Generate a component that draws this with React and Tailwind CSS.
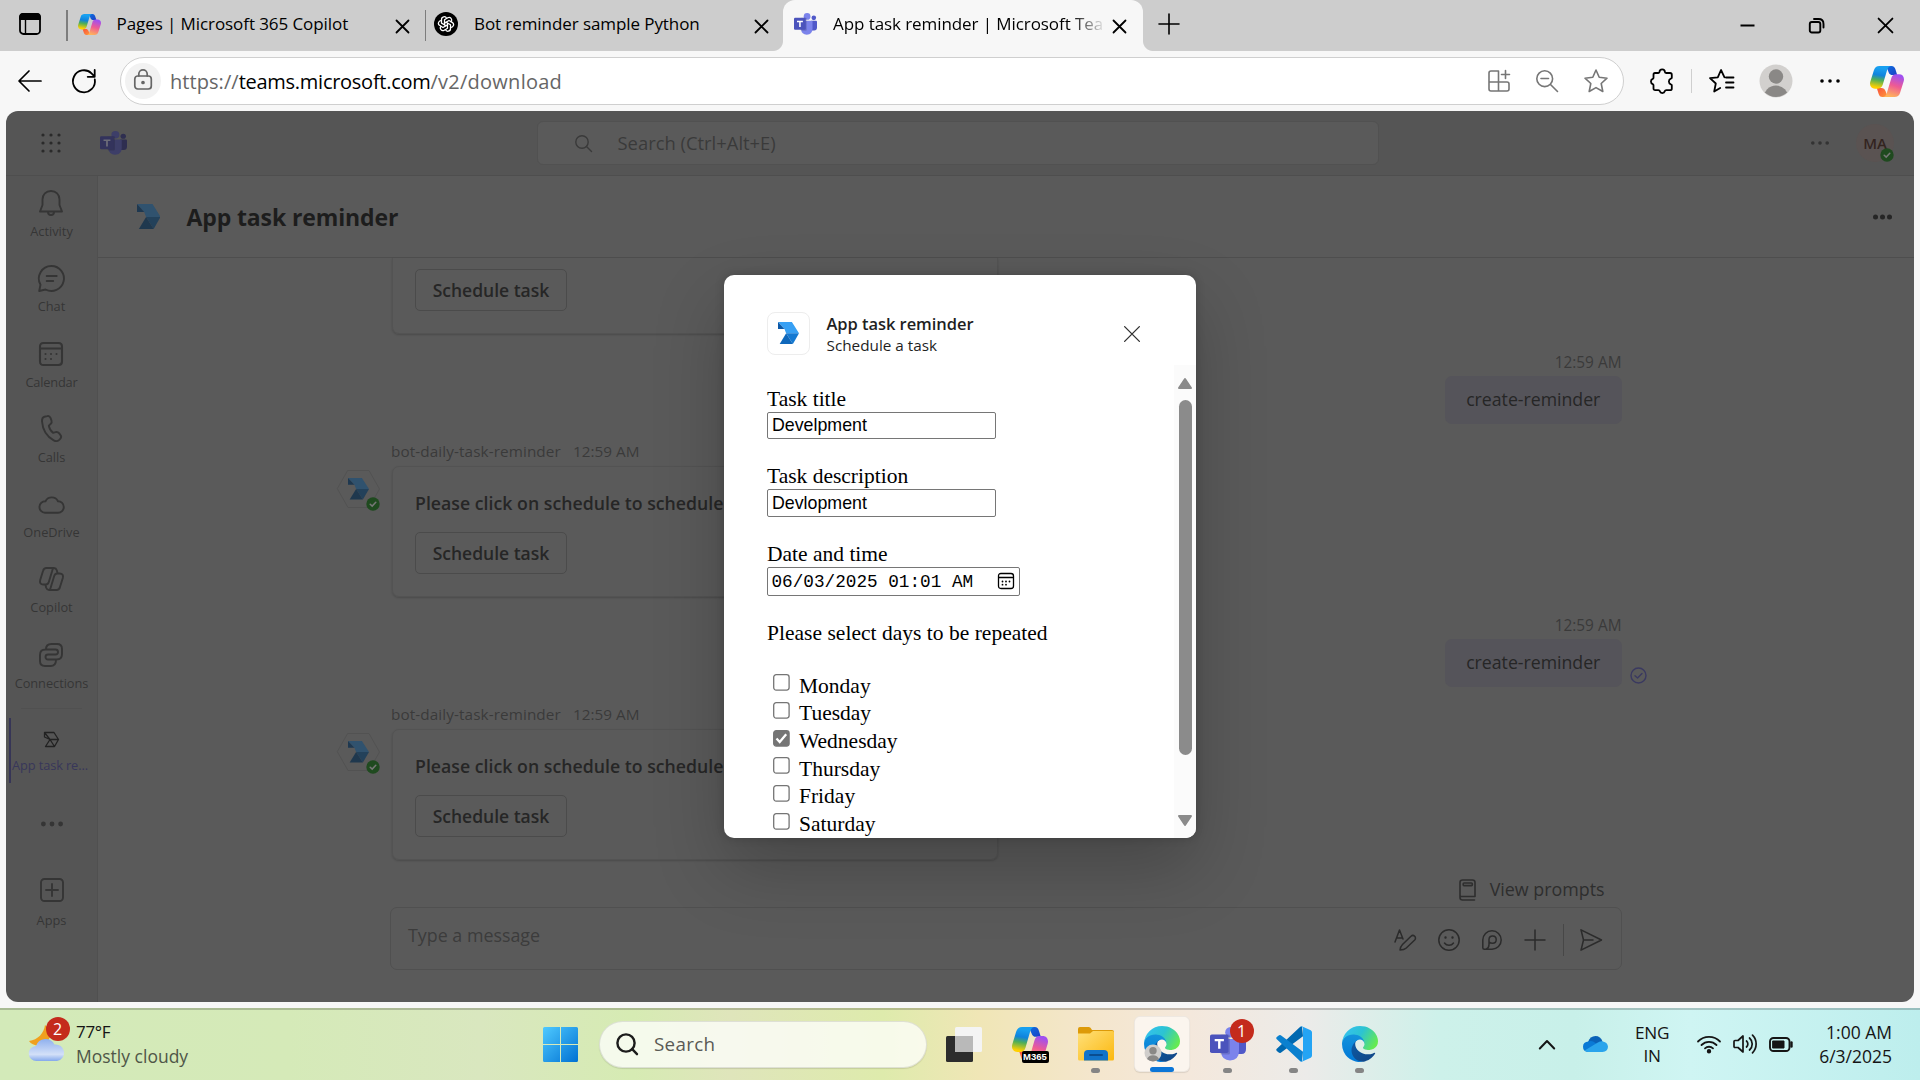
import { TbBrandOpenai } from "react-icons/tb";

function Ico({ w, h, sw = 1.6, className = "", children, vb }) {
  return (
    <svg
      width={w}
      height={h}
      viewBox={vb || `0 0 ${w} ${h}`}
      fill="none"
      stroke="currentColor"
      strokeWidth={sw}
      strokeLinecap="round"
      strokeLinejoin="round"
      className={`block shrink-0 overflow-visible ${className}`}
    >
      {children}
    </svg>
  );
}

/* ---------- logos ---------- */

function CopilotLogo({ w, h, className = "" }) {
  return (
    <svg width={w} height={h} viewBox="0 0 34 30" preserveAspectRatio="none" className={`block shrink-0 ${className}`}>
      <defs>
        <linearGradient id="cpA" x1="0.5" y1="0" x2="0.35" y2="1">
          <stop offset="0.1" stopColor="#18a0f0" />
          <stop offset="0.4" stopColor="#0f83dd" />
          <stop offset="0.62" stopColor="#4fae57" />
          <stop offset="0.95" stopColor="#ffd000" />
        </linearGradient>
        <linearGradient id="cpB" x1="0.7" y1="0" x2="0.4" y2="1">
          <stop offset="0.05" stopColor="#a050f0" />
          <stop offset="0.5" stopColor="#ee5a94" />
          <stop offset="1" stopColor="#ffb45a" />
        </linearGradient>
        <linearGradient id="cpC" x1="0" y1="0" x2="1" y2="1">
          <stop offset="0" stopColor="#0f6fe0" />
          <stop offset="1" stopColor="#1a3fc4" />
        </linearGradient>
        <linearGradient id="cpD" x1="0" y1="0" x2="1" y2="1">
          <stop offset="0" stopColor="#f9503c" />
          <stop offset="1" stopColor="#ff9a3c" />
        </linearGradient>
      </defs>
      <path d="M16 0h5.5c2.2 0 3.3 1.3 4 3.5l1.700 5.200h-4.400c-2.300 0-3.600-.9-4.300-3L17.300 3z" fill="url(#cpC)" />
      <path d="M18 30h-5.500c-2.200 0-3.300-1.300-4-3.500l-1.700-5.200h4.400c2.300 0 3.600.9 4.300 3l1.200 2.700z" fill="url(#cpD)" />
      <path d="M9.500 0H21c-2.300.4-3.300 2-4 4.400l-4.200 13.600c-.8 2.600-2.300 4-5 4H5C1.200 22-.8 19 .3 15.200l3.600-11C4.800 1.300 6.600 0 9.500 0z" fill="url(#cpA)" />
      <path d="M24.500 30H13c2.300-.4 3.300-2 4-4.400l4.200-13.600c.8-2.600 2.300-4 5-4H29c3.800 0 5.800 3 4.700 6.800l-3.600 11c-.9 2.900-2.700 4.200-5.600 4.200z" fill="url(#cpB)" />
    </svg>
  );
}

function TeamsLogo({ w, h, dim, className = "" }) {
  const c = dim
    ? { a: "#33335c", b: "#3d3e68", c: "#2e2e50", t: "#6c6c78" }
    : { a: "#4b53bc", b: "#7b83eb", c: "#5059c9", t: "#ffffff" };
  return (
    <svg width={w} height={h} viewBox="0 0 36 34" preserveAspectRatio="none" className={`block shrink-0 ${className}`}>
      <circle cx="31" cy="7.500" r="3.600" fill={c.c} />
      <path d="M27 12h7.500q1.500 0 1.500 1.500v8.500q0 5-4.500 5H27z" fill={c.c} />
      <circle cx="20.500" cy="5.300" r="5.300" fill={c.b} />
      <path d="M12 12h15.500q1.500 0 1.500 1.500V24q0 9-9 9.500-8-.4-9-8z" fill={c.b} />
      <rect x="10" y="7.500" width="10" height="20" rx="1.500" fill="#000" opacity="0.14" />
      <rect x="0" y="7.500" width="18.500" height="18.500" rx="1.800" fill={c.a} />
      <path d="M4.700 12h9.200v2.300h-3.400v7.500H8.100v-7.500H4.700z" fill={c.t} />
    </svg>
  );
}

function AppLogo({ w, h, dim, className = "" }) {
  const c = dim ? ["#30526e", "#23415a", "#1f384e", "#1e3850"] : ["#37a0f4", "#1479d2", "#0f68bb", "#0c59a8"];
  return (
    <svg width={w} height={h} viewBox="0 0 62 66" preserveAspectRatio="none" className={`block shrink-0 ${className}`}>
      <path d="M0 0H41L62 34H24L19 21Z" fill={c[0]} />
      <path d="M0 0V21H19Z" fill={c[3]} />
      <path d="M24 34H62L44 66Z" fill={c[1]} />
      <path d="M24 34L44 66H5Z" fill={c[2]} />
    </svg>
  );
}

function EdgeLogo() {
  return (
    <svg width="36" height="36" viewBox="0 0 256 256" className="block shrink-0">
      <defs>
        <linearGradient id="egA" x1="0.2" y1="0" x2="0.9" y2="0.6">
          <stop offset="0" stopColor="#0c59a4" />
          <stop offset="1" stopColor="#114a8b" />
        </linearGradient>
        <linearGradient id="egB" x1="0.5" y1="0" x2="0.4" y2="1">
          <stop offset="0" stopColor="#1595dc" />
          <stop offset="1" stopColor="#0078d7" />
        </linearGradient>
        <linearGradient id="egC" x1="0" y1="0.2" x2="1" y2="0.6">
          <stop offset="0" stopColor="#35c1f1" />
          <stop offset="0.5" stopColor="#2cc3d2" />
          <stop offset="1" stopColor="#66eb50" />
        </linearGradient>
      </defs>
      <path fill="url(#egA)" d="M231 190.500a99 99 0 0 1-10.800 4.700 104.700 104.700 0 0 1-36.600 6.500c-48.100 0-90-33.100-90-75.500a32 32 0 0 1 16.700-27.900c-43.500 1.800-54.700 47.200-54.700 73.700 0 75.100 69.200 82.700 84.100 82.700 8 0 20.100-2.300 27.400-4.600l1.300-.5a128 128 0 0 0 66.600-52.800 4 4 0 0 0-4-6.300z" />
      <path fill="url(#egB)" d="M105.700 241.400a79.200 79.200 0 0 1-22.700-21.300 80.700 80.700 0 0 1 29.500-119.700c3.100-1.500 8.500-4.100 15.600-4a32.400 32.400 0 0 1 25.700 13 31.900 31.900 0 0 1 6.300 18.700c0-.2 24.500-79.600-80-79.600-43.900 0-80 41.700-80 78.200a130 130 0 0 0 12.100 56 128 128 0 0 0 156.400 67 75.600 75.600 0 0 1-62.800-8z" />
      <path fill="url(#egC)" d="M152.300 148.900c-.8 1-3.300 2.500-3.300 5.700 0 2.600 1.700 5.100 4.700 7.200 14.400 10 41.500 8.700 41.600 8.700 10.700 0 21.100-2.900 30.300-8.300a61.400 61.400 0 0 0 30.400-53c.3-22.400-8-37.300-11.300-43.900C223.500 23.900 177.700 0 128 0A128 128 0 0 0 0 126.200c.5-36.500 36.800-66 80-66 3.500 0 23.500.3 42 10 16.300 8.600 24.900 19 30.800 29.300 6.200 10.700 7.300 24.200 7.300 29.500 0 5.400-2.800 13.400-7.800 19.900z" />
    </svg>
  );
}

function VsCodeLogo() {
  return (
    <svg width="36" height="36" viewBox="0 0 36 36" className="block shrink-0">
      <path d="M26 0.500L27 10.300L4.800 26.700Q3.700 27.500 2.700 26.600L0.800 24.900Q-0.300 23.800 0.800 22.700L24 1Q25 .2 26 .5Z" fill="#0068b0" />
      <path d="M26 35.500L27 25.700L4.800 9.300Q3.700 8.500 2.700 9.400L0.800 11.100Q-0.300 12.200 0.800 13.300L24 35Q25 35.800 26 35.500Z" fill="#0a80cf" />
      <path d="M26.300 .5L34.700 4.300Q36 5 36 6.500V29.500Q36 31 34.700 31.700L26.300 35.600Q25 36 24 35Q27 36 27 33V3Q27 0 24 1Q25 0 26.300 .5Z" fill="#24a4f4" />
    </svg>
  );
}

/* ---------- browser chrome ---------- */

const CloseX = ({ s = 13, sw = 1.8, className = "" }) => (
  <Ico w={s} h={s} sw={sw} vb="0 0 13 13" className={className}>
    <path d="M0.500 0.500L12.500 12.500M12.500 0.500L0.500 12.500" />
  </Ico>
);

function TabStrip() {
  return (
    <div className="flex h-[51px] items-center bg-[#cdcdcd] text-[17px] text-black">
      <div className="flex h-full w-[66px] items-center pb-1 pl-[19px]">
        <Ico w={22} h={22} sw={1.800}>
          <rect x="1" y="1" width="20" height="20" rx="3.500" />
          <path d="M1 6V4q0-3 3-3h14q3 0 3 3v2z" fill="currentColor" />
          <path d="M6.500 7v14" strokeWidth="1.400" />
        </Ico>
      </div>
      <div className="h-[31px] w-[1.500px] bg-[#7d7d7d]" />
      <div className="flex h-full w-[357px] items-center pb-[3px] pl-[10px]">
        <CopilotLogo w={23} h={21} />
        <span className="ml-[16px] w-[279px] tracking-[-0.080px] whitespace-nowrap">Pages | Microsoft 365 Copilot</span>
        <CloseX className="mt-1" />
      </div>
      <div className="h-[31px] w-[1.500px] bg-[#7d7d7d]" />
      <div className="flex h-full w-[357px] items-center pb-[3px] pl-[8px]">
        <span className="flex size-6 items-center justify-center rounded-full bg-black text-white">
          <TbBrandOpenai size={18} strokeWidth={1.700} />
        </span>
        <span className="ml-[16px] w-[281px] tracking-[-0.080px] whitespace-nowrap">Bot reminder sample Python</span>
        <CloseX className="mt-1" />
      </div>
      <div className="relative flex h-full w-[360px] items-center rounded-t-[12px] bg-[#f7f7f7] pb-[3px] pl-[11px]">
        <span className="absolute -left-[10px] bottom-0 size-[10px] bg-[radial-gradient(circle_at_0_0,#cdcdcd_9.500px,#f7f7f7_10.500px)]" />
        <span className="absolute -right-[10px] bottom-0 size-[10px] bg-[radial-gradient(circle_at_100%_0,#cdcdcd_9.500px,#f7f7f7_10.500px)]" />
        <TeamsLogo w={23} h={22} />
        <span className="ml-[16px] w-[272px] bg-[linear-gradient(90deg,#000_238px,#e0e0e0_270px)] bg-clip-text tracking-[-0.080px] whitespace-nowrap text-transparent">
          App task reminder | Microsoft Tea
        </span>
        <CloseX className="mt-1 ml-[8px]" />
      </div>
      <Ico w={20} h={20} sw={1.600} className="mb-[4px] ml-[16px]">
        <path d="M10 0v20M0 10h20" />
      </Ico>
      <div className="ml-auto flex items-center gap-[54px] pr-[27px]">
        <Ico w={15} h={15} sw={2}>
          <path d="M0.500 7.500h14" strokeLinecap="butt" />
        </Ico>
        <Ico w={15} h={15} sw={1.900}>
          <rect x="0.800" y="4" width="10.500" height="10.500" rx="2" />
          <path d="M5 1h4.500q5 0 5 5v3.500" />
        </Ico>
        <CloseX s={15} sw={1.600} />
      </div>
    </div>
  );
}

function Toolbar() {
  return (
    <div className="flex h-[60px] items-center bg-[#f7f7f7] text-black">
      <Ico w={24} h={22} sw={1.700} className="ml-[18px]">
        <path d="M23 11H1.500M11 1L1 11l10 10" />
      </Ico>
      <Ico w={24} h={24} sw={1.800} className="ml-[30px]">
        <path d="M22.800 10.500A11 11 0 1 1 19.500 4.300L22.500 7.500M22.700 1v6.800h-7" />
      </Ico>
      <div className="ml-[23.500px] flex h-[48px] w-[1504px] items-center rounded-full border-[1.500px] border-[#cfcfcf] bg-white pl-[4.500px] text-[#666]">
        <span className="flex size-[36px] items-center justify-center rounded-full bg-[#f2f2f2]">
          <Ico w={18} h={21} sw={1.700} className="-mt-1">
            <rect x="0.800" y="7" width="16.500" height="13" rx="3" />
            <path d="M4.800 7V5a4.200 4.200 0 0 1 8.400 0v2" />
            <circle cx="9" cy="13.500" r="1" fill="currentColor" />
          </Ico>
        </span>
        <span className="ml-[9px] pt-px text-[20px] whitespace-nowrap">
          <span className="tracking-[0.060px]">https://</span>
          <span className="tracking-[-0.270px] text-black">teams.microsoft.com</span>
          <span className="tracking-[0.250px]">/v2/download</span>
        </span>
        <div className="mr-[15px] ml-auto flex items-center gap-[26px] text-[#767676]">
          <Ico w={22} h={22} sw={1.600}>
            <path d="M10.500 1H3q-2 0-2 2v16q0 2 2 2h16q2 0 2-2v-5q0-2-2-2H1M10.500 1v20M17.500 0.500v8M13.500 4.500h8" />
          </Ico>
          <Ico w={22} h={22} sw={1.600}>
            <circle cx="8.700" cy="8.700" r="7.900" />
            <path d="M14.500 14.500l7 7M5 8.500h7.500" />
          </Ico>
          <Ico w={24} h={24} sw={1.600}>
            <path d="M12 1l3.200 7.300 7.800.9-5.800 5.300 1.600 8L12 18.600 5.200 22.500l1.600-8L1 9.200l7.800-.9z" />
          </Ico>
        </div>
      </div>
      <Ico w={24} h={24} sw={1.800} className="ml-[26px]">
        <path d="M5 4h3.300q1.200 0 1.200-.9a2.700 2.700 0 0 1 5.400 0q0 .9 1.200.9H20q1.800 0 1.800 1.800v3q0 .9-1 .9a3 3 0 0 0 0 5.600q1 0 1 1v3.100q0 1.800-1.800 1.800h-3.700q-1.200 0-1.400.9a2.700 2.700 0 0 1-5.200 0q-.2-.9-1.400-.9H5.200q-1.700 0-1.700-1.800v-3.200q0-.8-.8-1.100a2.800 2.800 0 0 1 0-5.200q.8-.3.8-1.100v-3Q3.500 4 5 4z" />
      </Ico>
      <div className="ml-[17px] h-[24px] w-[1.500px] bg-[#cfcfcf]" />
      <Ico w={25} h={24} sw={1.800} className="ml-[17px]">
        <path d="M15.500 8.300L12 1 8.800 8.300 1 9.200l5.800 5.300-1.600 8 6-3.500M17 8.500h7.500M17 13.500h7.500M17 18.500h7.500" />
      </Ico>
      <svg width="34" height="34" viewBox="0 0 34 34" className="ml-[25px] block shrink-0">
        <clipPath id="avc"><circle cx="17" cy="17" r="16" /></clipPath>
        <circle cx="17" cy="17" r="16.500" fill="#d2d0ce" />
        <g clipPath="url(#avc)" fill="#8a8886">
          <circle cx="17" cy="12.500" r="7.200" />
          <circle cx="17" cy="34" r="12.500" />
        </g>
      </svg>
      <Ico w={20} h={6} className="ml-[27px]">
        <g fill="currentColor" stroke="none">
          <circle cx="2" cy="3" r="1.800" />
          <circle cx="10" cy="3" r="1.800" />
          <circle cx="18" cy="3" r="1.800" />
        </g>
      </Ico>
      <CopilotLogo w={34} h={31} className="ml-[30px]" />
    </div>
  );
}

/* ---------- Teams page ---------- */

function Dots({ w, r, className = "" }) {
  return (
    <svg width={w} height="8" viewBox={`0 0 ${w} 8`} fill="currentColor" className={`block shrink-0 ${className}`}>
      <circle cx={r} cy="4" r={r} />
      <circle cx={w / 2} cy="4" r={r} />
      <circle cx={w - r} cy="4" r={r} />
    </svg>
  );
}

function Status({ className = "" }) {
  return (
    <svg width="14" height="14" viewBox="0 0 14 14" className={`absolute ${className}`}>
      <circle cx="7" cy="7" r="6.700" fill="#1f4a1f" />
      <path d="M4.200 7.200l2 1.900 3.600-3.800" fill="none" stroke="#777" strokeWidth="1.500" strokeLinecap="round" />
    </svg>
  );
}

function TeamsHeader() {
  return (
    <div className="flex h-[65px] items-center border-b border-[#4e4e4e] bg-[#555] pr-[20px] text-[#333]">
      <svg width="20" height="20" viewBox="0 0 20 20" fill="#2a2a2a" className="ml-[35px]">
        {[2, 10, 18].map((y) => [2, 10, 18].map((x) => <circle key={`${x}-${y}`} cx={x} cy={y} r="1.600" />))}
      </svg>
      <TeamsLogo w={27} h={24} dim className="ml-[38.500px]" />
      <div className="ml-[410px] flex h-[44px] w-[842px] items-center rounded-[6px] border border-[#515151] bg-[#5a5a5a] pl-[37px] text-[18.400px] text-[#3a3a3a]">
        <Ico w={17} h={17} sw={1.400}>
          <circle cx="7" cy="7" r="6.200" />
          <path d="M11.500 11.500l5 5" />
        </Ico>
        <span className="ml-[26px]">Search (Ctrl+Alt+E)</span>
      </div>
      <Dots w={18} r={1.800} className="ml-auto" />
      <div className="relative ml-[27px] flex size-[38px] items-center justify-center rounded-full bg-[#5a5352] text-[15px] font-semibold text-[#33241f]">
        MA
        <Status className="top-[24px] left-[24px]" />
      </div>
    </div>
  );
}

const NAV = [
  ["Activity", 24, 27, "M12 1C7 1 3.500 4.600 3.500 9.500V15L1 21.500H23L20.500 15V9.500C20.500 4.600 17 1 12 1ZM9 22a3 3 0 0 0 6 0", "tracking-normal"],
  ["Chat", 27, 27, "M13.500 1a12.500 12.500 0 1 1-6 23.500L1.200 26 2.500 19.700A12.500 12.500 0 0 1 13.500 1ZM8.700 11h10M8.700 16h6.500", "tracking-normal"],
  ["Calendar", 24, 24, "M4.500 1h15Q23 1 23 4.500v15q0 3.500-3.500 3.500h-15Q1 23 1 19.500v-15Q1 1 4.500 1ZM1 6.500h22M6.500 12h.01M12 12h.01M17.500 12h.01M6.500 17h.01M12 17h.01", "tracking-[-0.200px]"],
  ["Calls", 21, 27, "M3.500 1.700l2.700-.6c1.600-.4 2.700.3 3.300 1.800l1 2.700c.5 1.400.2 2.400-.9 3.400L7.800 10.600c.5 3 1.900 5.300 4.200 7.200l2.600-.7c1.500-.4 2.500-.1 3.400 1l1.500 2c1 1.400.9 2.600-.3 3.800l-1 1c-1.500 1.400-3.500 1.600-5.500.5C5.700 21.500 1.600 14.500 1 6.300 .9 3.900 1.700 2.200 3.500 1.700Z", "tracking-normal"],
  ["OneDrive", 27, 19, "M7.500 6.200A7 7 0 0 1 20 6.200a5.800 5.800 0 0 1 0 11.600H7A5.800 5.800 0 0 1 7.500 6.200Z", "tracking-normal"],
  ["Copilot", 25, 24, "M7.500 1H15c1.500 0 2.300.8 2.800 2.200L18.500 6M7.500 1C5.500 1 4.500 2 4 4L1.200 13c-.7 2.500.3 4.500 3 4.500h2.600c1.600 0 2.500-.9 3-2.500L13 4.500C13.500 2.500 13.700 1 15 1M17.500 23H10c-1.500 0-2.300-.8-2.800-2.200L6.500 18M17.500 23c2 0 3-1 3.500-3l2.800-9c.7-2.500-.3-4.500-3-4.500h-2.600c-1.600 0-2.500.9-3 2.500L12 19.500c-.5 2-.7 3.500-2 3.500", "tracking-normal"],
  ["Connections", 24, 24, "M7 6.500C7 3 9 1 12.500 1H18q5 0 5 5v5q0 5.500-5.500 5.500H9a2.500 2.500 0 0 1 0-5h7.500a2.500 2.500 0 0 0 0-5H6.500Q1 6.500 1 12v6q0 5 5 5h5.500q5.500 0 5.500-6", "tracking-[-0.050px]"],
];

function SideNav() {
  return (
    <nav className="flex w-[92px] shrink-0 flex-col items-center border-r border-[#505050] bg-[#555] text-[12.800px] text-[#353535]">
      {NAV.map(([name, w, h, d, tr]) => (
        <div key={name} className="flex h-[75.300px] flex-col items-center">
          <div className="flex h-[54px] items-center">
            <Ico w={w} h={h} sw={name === "Calendar" ? 2.100 : 1.900}>
              <path d={d} />
            </Ico>
          </div>
          <span className={`-mt-[8px] leading-[19px] ${tr}`}>{name}</span>
        </div>
      ))}
      <div className="mt-[5px] h-px w-[61px] bg-[#505050]" />
      <div className="relative mt-[8.500px] flex h-[65px] w-full flex-col items-center">
        <span className="absolute top-0 left-[3px] h-full w-[2px] bg-[#363556]" />
        <Ico w={15} h={15} sw={1.300} className="mt-[14px] text-[#222]">
          <path d="M0.500 0.500h9.500L14.500 7.500 10.500 14.500H1.500L6 7.500.5 5zM.5 .5L6 7.500h8.500M6 7.500l4.500 7" />
        </Ico>
        <span className="mt-[9px] mr-[3px] leading-[19px] tracking-[-0.100px] whitespace-nowrap text-[#38375a]">App task re...</span>
      </div>
      <Dots w={22} r={2.400} className="mt-[37px]" />
      <Ico w={24} h={24} sw={1.900} className="mt-[50px]">
        <rect x="1" y="1" width="22" height="22" rx="3.500" />
        <path d="M12 6v12M6 12h12" />
      </Ico>
      <span className="mt-[9px] leading-[19px]">Apps</span>
    </nav>
  );
}

function TaskButton() {
  return (
    <div className="flex h-[41.500px] w-[152px] items-center justify-center rounded-[5px] border border-[#4b4b4b] text-[17.500px] font-semibold text-[#262626]">
      Schedule task
    </div>
  );
}

function BotMessage() {
  return (
    <div className="flex">
      <div className="relative mt-[30px] flex h-[38px] w-[43px] shrink-0 items-center justify-center">
        <Ico w={43} h={38} sw={1} className="absolute top-0 left-0 text-[#525252]">
          <path d="M11 0.500H32L42.500 19 32 37.500H11L.5 19Z" />
        </Ico>
        <AppLogo w={21} h={21.500} dim className="relative" />
        <Status className="top-[27px] left-[29px]" />
      </div>
      <div className="ml-[11px]">
        <div className="flex h-[24px] items-center pb-[2px] text-[15.300px] text-[#3a3a3a]">
          <span className="w-[182px] tracking-[0.090px]">bot-daily-task-reminder</span>
          <span>12:59 AM</span>
        </div>
        <div className="mt-[2px] ml-px h-[131px] w-[606px] rounded-[7px] border border-[#535353] pt-[24px] pl-[22px] shadow-[0_1px_2px_rgba(0,0,0,0.180)]">
          <div className="h-[24px] text-[17.700px] leading-[24px] font-semibold tracking-[0.020px] whitespace-nowrap text-[#262626]">
            Please click on schedule to schedule
          </div>
          <div className="mt-[17px]">
            <TaskButton />
          </div>
        </div>
      </div>
    </div>
  );
}

function MyMessage({ seen }) {
  return (
    <div className="relative flex flex-col items-end">
      <div className="h-[25px] text-[15.400px] leading-[24px] text-[#3a3a3a]">12:59 AM</div>
      <div className="flex h-[48px] w-[176.500px] items-center justify-center rounded-[7px] bg-[#55545a] pb-[1px] text-[17.700px] text-[#262626]">
        create-reminder
      </div>
      {seen && (
        <Ico w={17} h={17} sw={1.400} className="absolute -right-[25px] bottom-[3px] text-[#3a3960]">
          <circle cx="8.500" cy="8.500" r="7.500" />
          <path d="M5 8.700l2.500 2.400 4.500-4.600" />
        </Ico>
      )}
    </div>
  );
}

function Compose() {
  return (
    <div className="mt-[5px] ml-[53px] flex h-[63px] items-center rounded-[7px] border border-[#505050] pr-[19px] pl-[17px] text-[#2b2b2b]">
      <span className="pb-[6px] text-[17.850px] text-[#3c3c3c]">Type a message</span>
      <div className="ml-auto flex items-center pt-[2px]">
        <Ico w={22} h={22} sw={1.500}>
          <path d="M1 13L5.500 1 9 10M2.500 9h6M6 21c.3-2.500 1-4 2.500-5.500l8.500-8.200a2.600 2.600 0 0 1 3.700 3.700L12 19.300C10.500 20.700 8.500 21 6 21z" />
        </Ico>
        <Ico w={22} h={22} sw={1.500} className="ml-[22.500px]">
          <circle cx="11" cy="11" r="10.200" />
          <path d="M6.500 14a5.500 5.500 0 0 0 9 0" />
          <path d="M7.500 8.500h.01M14.500 8.500h.01" strokeWidth="2.400" />
        </Ico>
        <Ico w={20} h={20} sw={1.500} className="ml-[22px]">
          <path d="M.8 10a9.200 9.200 0 1 1 9.200 9.200H2.300Q.8 19.200.8 17.700zM7 14.500c0 2.500-1 4-3 4.700M7 14.500V9.500a3.600 3.600 0 1 1 3.600 3.800c-1.500 0-2.600-.4-3.400-1.300" />
        </Ico>
        <Ico w={20} h={20} sw={1.500} className="ml-[22.500px]">
          <path d="M10 0v20M0 10h20" />
        </Ico>
        <div className="ml-[18px] h-[32px] w-px bg-[#474747]" />
        <Ico w={22} h={22} sw={1.500} className="ml-[16px]">
          <path d="M1 .8L21.500 11 1 21.200 3.500 11zM3.500 11H13" />
        </Ico>
      </div>
    </div>
  );
}

function Chat() {
  return (
    <main className="flex min-w-0 flex-1 flex-col bg-[#5a5a5a]">
      <header className="flex h-[82px] shrink-0 items-center border-b border-[#4e4e4e] pr-[22px] pl-[38.500px]">
        <AppLogo w={23.500} h={25} dim />
        <h1 className="ml-[26.500px] pt-px text-[23px] font-bold tracking-[-0.120px] text-[#1d1d1d]">App task reminder</h1>
        <Dots w={19} r={2.500} className="ml-auto text-[#262626]" />
      </header>
      <div className="ml-[239px] w-[1284.500px]">
        <div className="ml-[55px] h-[76px] w-[606px] rounded-b-[7px] border border-t-0 border-[#535353] pt-[11px] pl-[22px] shadow-[0_1px_2px_rgba(0,0,0,0.180)]">
          <TaskButton />
        </div>
        <div className="h-[17px]" />
        <MyMessage />
        <div className="h-[16px]" />
        <BotMessage />
        <div className="h-[17px]" />
        <MyMessage seen />
        <div className="h-[16px]" />
        <BotMessage />
        <div className="mt-[17px] flex h-[25px] items-center justify-end pr-[17px] text-[17.850px] text-[#2e2e2e]">
          <Ico w={17} h={22} sw={1.600} className="mr-[13.500px]">
            <path d="M16 17.500V3.500Q16 1 13.500 1h-10Q1 1 1 3.500V18.500Q1 21 3.500 21H15.500M1 18q0-.5 1.500-.5H16M5 4h7.500q.8 0 .8.800v1q0 .8-.8.8H5q-.8 0-.8-.8v-1Q4.200 4 5 4z" />
          </Ico>
          View prompts
        </div>
        <Compose />
      </div>
    </main>
  );
}

/* ---------- dialog ---------- */

const DAYS = ["Monday", "Tuesday", "Wednesday", "Thursday", "Friday", "Saturday"];

function Field({ label, value }) {
  return (
    <>
      <div className="h-[26px] leading-[26px]">{label}</div>
      <div className="mb-[24px] flex h-[27.300px] w-[229px] items-center rounded-[2px] border-[1.200px] border-[#767676] pl-[4px] font-['Liberation_Sans',sans-serif] text-[17.800px]">
        {value}
      </div>
    </>
  );
}

function Dialog() {
  return (
    <div className="absolute top-[164px] left-[718px] flex h-[563px] w-[472px] flex-col overflow-hidden rounded-[10px] bg-white">
      <div className="flex h-[90px] shrink-0 items-start pt-[36.500px] pl-[43px]">
        <div className="flex size-[43px] items-center justify-center rounded-[8px] border border-[#ededed]">
          <AppLogo w={21} h={22} />
        </div>
        <div className="ml-[16.500px] text-[#1f1f1f]">
          <div className="text-[16.500px] leading-[24px] font-semibold tracking-[-0.060px]">App task reminder</div>
          <div className="-mt-[2px] text-[15.300px] leading-[22px]">Schedule a task</div>
        </div>
        <CloseX s={16} sw={1.100} className="mt-[14px] mr-[56.500px] ml-auto text-[#333]" />
      </div>
      <div className="flex min-h-0 flex-1">
        <div className="flex-1 overflow-hidden pt-[21px] pl-[43px] font-['Liberation_Serif',serif] text-[21.500px] text-black">
          <Field label="Task title" value="Develpment" />
          <Field label="Task description" value="Devlopment" />
          <div className="h-[26px] leading-[26px]">Date and time</div>
          <div className="mb-[24px] flex h-[29px] w-[253px] items-center justify-between rounded-[2px] border-[1.200px] border-[#767676] pr-[5px] pl-[3.500px] font-['Liberation_Mono',monospace] text-[17.700px] whitespace-pre">
            <span className="pt-[2px]">06/03/2025 01:01 AM</span>
            <Ico w={16} h={16} sw={1.300}>
              <path d="M3 .5h10Q15.500.5 15.500 3v10q0 2.500-2.500 2.500H3Q.5 15.500.5 13V3Q.5.500 3 .5zM.5 4.500h15" />
              <path d="M4.500 8.500h.01M8 8.500h.01M11.500 8.500h.01M4.500 11.700h.01M8 11.700h.01" strokeWidth="1.800" />
            </Ico>
          </div>
          <div className="mb-[26px] h-[26px] leading-[26px] tracking-[0.020px]">Please select days to be repeated</div>
          {DAYS.map((day) => (
            <div key={day} className="flex h-[27.650px] items-center pl-[6px]">
              <svg width="17" height="17" viewBox="0 0 17 17" className="mb-[5px] block">
                <rect
                  x="0.700"
                  y="0.700"
                  width="15.400"
                  height="15.400"
                  rx="2.500"
                  fill={day === "Wednesday" ? "#757575" : "#fff"}
                  stroke="#757575"
                  strokeWidth="1.300"
                />
                {day === "Wednesday" && <path d="M3.500 8.500l3.200 3.500L13.200 4.300" fill="none" stroke="#fff" strokeWidth="2.300" />}
              </svg>
              <span className="ml-[9px] pt-[2px] leading-none">{day}</span>
            </div>
          ))}
        </div>
        <div className="flex w-[22px] flex-col items-center bg-[#fbfbfb] pt-[13px] pb-[12px] text-[#8b8b8b]">
          <Ico w={14} h={11} sw={2}>
            <path d="M7 1L13 10H1z" fill="currentColor" />
          </Ico>
          <div className="mt-[11px] h-[355px] w-[13px] rounded-full bg-[#8b8b8b]" />
          <Ico w={14} h={11} sw={2} className="mt-auto">
            <path d="M7 10L13 1H1z" fill="currentColor" />
          </Ico>
        </div>
      </div>
    </div>
  );
}

/* ---------- taskbar ---------- */

function AppSlot({ children, mark, active }) {
  return (
    <div
      className={`relative flex h-[56px] w-[56px] items-center justify-center rounded-[6px] ${
        active ? "border border-black/5 bg-[#fbf5ee] shadow-[0_1px_1px_rgba(0,0,0,0.100)]" : ""
      }`}
    >
      {children}
      {mark && (
        <span
          className={`absolute bottom-[-1px] h-[5px] rounded-full ${active ? "w-[24px] bg-[#0b76d8]" : "w-[9px] bg-[#858585]"}`}
        />
      )}
    </div>
  );
}

function Taskbar() {
  return (
    <div className="flex h-[72px] items-center border-t-2 border-black/20 bg-[linear-gradient(90deg,#d3eab9_0%,#d5eab8_15%,#d9e7bf_25%,#d6ebb3_33%,#dfe5bb_38%,#deebac_46%,#f0e6b6_51%,#f4e6cd_57%,#f4e8dc_62%,#ecebe9_68%,#cdf1ea_75%,#c8f0e9_82%,#cff5f3_88%,#bdeeed_100%)] pb-[2px] text-[17.500px] text-[#151515]">
      <div className="relative ml-[28px] h-[40px] w-[38px]">
        <svg width="38" height="38" viewBox="0 0 38 38" className="block">
          <defs>
            <linearGradient id="cl" x1="0" y1="0" x2="0" y2="1">
              <stop offset="0" stopColor="#8fb0ee" />
              <stop offset="0.700" stopColor="#d3e0f8" />
              <stop offset="1" stopColor="#84a8ec" />
            </linearGradient>
          </defs>
          <path d="M17 1c-1 8-7 15-16 16 3 5 12 6 17 2s6-12-1-18z" fill="#f0a01e" />
          <path d="M8.500 37a7.500 7.500 0 0 1-.5-15 10 10 0 0 1 18.500-1.500A8.300 8.300 0 0 1 29 37z" fill="url(#cl)" />
        </svg>
        <span className="absolute -top-[7px] left-[17.500px] flex size-[24px] items-center justify-center rounded-full bg-[#c42b1c] text-[16px] text-white">2</span>
      </div>
      <div className="ml-[10px] w-[467px] leading-[24px] whitespace-nowrap">
        <div className="text-[17px] tracking-[-0.300px]">77°F</div>
        <div className="text-[#4f5648]">Mostly cloudy</div>
      </div>
      <svg width="35" height="35" viewBox="0 0 35 35" className="block">
        <defs>
          <linearGradient id="wn" x1="0" y1="0" x2="35" y2="35" gradientUnits="userSpaceOnUse">
            <stop offset="0" stopColor="#4fcaff" />
            <stop offset="1" stopColor="#0071d3" />
          </linearGradient>
        </defs>
        <path d="M1.500 0H17v17H0V1.500Q0 0 1.500 0zM18 0h15.500Q35 0 35 1.500V17H18zM0 18h17v17H1.500Q0 35 0 33.500zM18 18h17v15.500q0 1.500-1.500 1.500H18z" fill="url(#wn)" />
      </svg>
      <div className="ml-[21px] flex h-[47px] w-[328px] items-center rounded-full border border-black/10 bg-white/75 pl-[16px] text-[18.800px] text-[#5a5a55] shadow-[0_1px_1px_rgba(0,0,0,0.120)]">
        <Ico w={22} h={22} sw={2.400} className="text-[#1c1c1c]">
          <circle cx="10" cy="10" r="8.600" />
          <path d="M16.200 16.200l4.800 5" />
        </Ico>
        <span className="ml-[16px] tracking-[0.300px]">Search</span>
      </div>
      <div className="ml-[8.500px] flex items-center gap-[10px]">
        <AppSlot>
          <svg width="36" height="35" viewBox="0 0 36 35">
            <rect x="0" y="9" width="27" height="26" rx="1.500" fill="#2c2c2c" />
            <rect x="9" y="0" width="27" height="25" rx="1.500" fill="#f4f4f4" />
            <rect x="9" y="9" width="18" height="16" fill="#b9b9b9" />
          </svg>
        </AppSlot>
        <AppSlot>
          <CopilotLogo w={36} h={34} />
          <span className="absolute bottom-[9px] left-[20px] flex h-[12px] w-[27px] items-center justify-center rounded-[2px] bg-black font-['Liberation_Sans',sans-serif] text-[9.500px] font-bold text-white">
            M365
          </span>
        </AppSlot>
        <AppSlot mark>
          <svg width="36" height="34" viewBox="0 0 36 34">
            <defs>
              <linearGradient id="fd" x1="0" y1="0" x2="1" y2="1">
                <stop offset="0" stopColor="#ffe07a" />
                <stop offset="1" stopColor="#fbb80f" />
              </linearGradient>
            </defs>
            <path d="M0 2q0-2 2-2h9q1.500 0 3 3h20q2 0 2 2v6H0z" fill="#dd9a08" />
            <path d="M0 6.500h12L15 4h19.500Q36 4 36 5.500V32q0 1.500-1.500 1.500h-33Q0 33.500 0 32z" fill="url(#fd)" />
            <path d="M6 33.500V27q0-4 4-4h16q4 0 4 4v6.500z" fill="#1173c9" />
            <path d="M12 28h12" stroke="#0a4d90" strokeWidth="2" strokeLinecap="round" />
          </svg>
        </AppSlot>
        <AppSlot mark active>
          <EdgeLogo />
          <svg width="18" height="18" viewBox="0 0 18 18" className="absolute bottom-[9px] left-[9px]">
            <circle cx="9" cy="9" r="8.500" fill="#cfcdcb" />
            <circle cx="9" cy="6.700" r="3.700" fill="#8a8886" />
            <path d="M3 15a6.300 5.500 0 0 1 12 0 8.500 8.500 0 0 1-12 0z" fill="#8a8886" />
          </svg>
        </AppSlot>
        <AppSlot mark>
          <TeamsLogo w={36} h={34} />
          <span className="absolute top-[3px] right-[2px] flex size-[24px] items-center justify-center rounded-full bg-[#c42b1c] text-[16px] text-white">1</span>
        </AppSlot>
        <AppSlot mark>
          <VsCodeLogo />
        </AppSlot>
        <AppSlot mark>
          <EdgeLogo />
        </AppSlot>
      </div>
      <div className="ml-auto flex items-center pr-[28px]">
        <Ico w={16} h={9} sw={2}>
          <path d="M.8 8.500L8 1l7.200 7.500" />
        </Ico>
        <svg width="25" height="16" viewBox="0 0 25 16" className="ml-[28px] block">
          <path d="M5 6Q7 0 12.500 0q5 0 7 5.500L14 12H3z" fill="#0a62b8" />
          <path d="M5.500 5.500Q9 4 12.500 7L18 11 5 16Q0 15.500 0 10.700 0 6 5.500 5.500z" fill="#0a7ad6" />
          <path d="M19 5.200q5.700.8 6 5.500-.3 5-5.500 5.300H5q-2-.2-3.300-1.500L14 7Q16.500 5 19 5.200z" fill="#2aa4ec" />
        </svg>
        <div className="ml-[25.500px] w-[38px] text-center text-[17.200px] leading-[23px] tracking-[-0.200px]">
          ENG
          <br />
          IN
        </div>
        <Ico w={24} h={18} sw={1.800} className="ml-[26px]">
          <path d="M1 6.500a15.500 15.500 0 0 1 22 0M4.500 10a10.600 10.600 0 0 1 15 0M8 13.400a5.700 5.700 0 0 1 8 0" />
          <circle cx="12" cy="16.200" r="1.300" fill="currentColor" />
        </Ico>
        <Ico w={24} h={20} sw={1.700} className="ml-[12px]">
          <path d="M1 7.500Q1 6.500 2 6.500h3L10 2v16l-5-4.500H2q-1 0-1-1zM13.500 7a4 4 0 0 1 0 6M16.500 4a8 8 0 0 1 0 12M19.500 1.200a12.500 12.500 0 0 1 0 17.600" />
        </Ico>
        <Ico w={24} h={15} sw={1.900} className="ml-[12px]">
          <rect x="1" y="1" width="19.500" height="13" rx="3.500" />
          <rect x="4" y="4" width="11" height="7" fill="currentColor" strokeWidth="1" />
          <path d="M22.500 5.500v4" strokeWidth="2.400" />
        </Ico>
        <div className="ml-[26px] text-right leading-[24px]">
          1:00 AM
          <br />
          6/3/2025
        </div>
      </div>
    </div>
  );
}

export default function App() {
  return (
    <div className="flex h-[1080px] w-[1920px] flex-col overflow-hidden bg-[#f7f7f7] font-['Open_Sans','Noto_Sans',sans-serif]">
      <TabStrip />
      <Toolbar />
      <div className="relative mx-[6px] flex h-[891px] flex-col overflow-hidden rounded-[12px]">
        <TeamsHeader />
        <div className="flex min-h-0 flex-1">
          <SideNav />
          <Chat />
        </div>
        <div className="absolute top-[164px] left-[718px] h-[563px] w-[472px] rounded-[10px] shadow-[0_30px_70px_rgba(0,0,0,0.220),0_0_10px_rgba(0,0,0,0.180)]" />
        <Dialog />
      </div>
      <div className="h-[6px] shrink-0" />
      <Taskbar />
    </div>
  );
}
